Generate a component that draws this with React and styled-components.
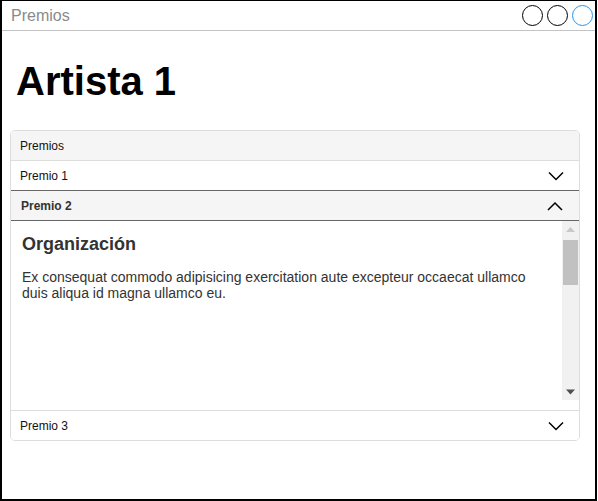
import React from "react";
import styled, { createGlobalStyle } from "styled-components";

const GlobalStyle = createGlobalStyle`
  html, body {
    margin: 0;
    padding: 0;
    background: #fff;
  }
  body {
    font-family: "Liberation Sans", Arial, Helvetica, sans-serif;
  }
`;

const Frame = styled.div`
  box-sizing: border-box;
  width: 597px;
  height: 501px;
  border: 2px solid #000;
  border-top-width: 1px;
  display: flex;
  flex-direction: column;
  overflow: hidden;
`;

const TitleBar = styled.div`
  height: 29px;
  border-bottom: 1px solid #c4c4c4;
  display: flex;
  align-items: center;
  justify-content: space-between;
  padding: 0 2px 0 9px;
`;

const TitleText = styled.span`
  font-size: 16px;
  color: #8a8a8a;
`;

const Dots = styled.div`
  display: flex;
  gap: 4px;
`;

const Dot = styled.span`
  box-sizing: border-box;
  width: 21px;
  height: 21px;
  border-radius: 50%;
  border: 1px solid ${(p) => (p.$active ? "#2196f3" : "#000")};
`;

const Content = styled.div`
  padding: 0 8px;
`;

const Heading = styled.h1`
  margin: 27px 6px 26px;
  font-size: 40px;
  line-height: 46px;
  font-weight: bold;
  color: #000;
`;

const Card = styled.div`
  box-sizing: border-box;
  width: 570px;
  border: 1px solid #ddd;
  border-radius: 5px;
  overflow: hidden;
`;

const CardHeader = styled.div`
  height: 29px;
  display: flex;
  align-items: center;
  padding: 0 9px;
  background: #f5f5f5;
  border-bottom: 1px solid #ddd;
  font-size: 12px;
  color: #111;
`;

const Row = styled.div`
  box-sizing: border-box;
  height: ${(p) => (p.$open ? "31px" : "29px")};
  display: flex;
  align-items: center;
  justify-content: space-between;
  font-size: 12px;
  color: ${(p) => (p.$open ? "#333" : "#111")};
  font-weight: ${(p) => (p.$open ? "bold" : "normal")};
  background: ${(p) => (p.$open ? "#f5f5f5" : "#fff")};
  border: ${(p) => (p.$open ? "1px solid #666" : "none")};
  margin: ${(p) => (p.$open ? "0 -1px" : "0")};
  padding-left: ${(p) => (p.$open ? "10px" : "9px")};
  padding-right: ${(p) => (p.$open ? "16px" : "15px")};
`;

const Body = styled.div`
  padding-bottom: 10px;
  border-bottom: 1px solid #ddd;
`;

const Scroller = styled.div`
  height: 179px;
  display: flex;
`;

const Panel = styled.div`
  flex: 1;
  padding: 10px 11px;
  color: #333;
`;

const PanelTitle = styled.h3`
  margin: 2px 0 14px;
  font-size: 18px;
  line-height: 22px;
  font-weight: bold;
`;

const PanelText = styled.p`
  margin: 0;
  font-size: 14px;
  line-height: 16px;
`;

const ScrollBar = styled.div`
  width: 17px;
  background: #f1f1f1;
  display: flex;
  flex-direction: column;
`;

const ScrollButton = styled.div`
  height: 17px;
  display: flex;
  align-items: center;
  justify-content: center;
`;

const ScrollTrack = styled.div`
  flex: 1;
  padding: 2px 1px;
`;

const Thumb = styled.div`
  height: 45px;
  background: #c1c1c1;
`;

const Chevron = ({ up }) => (
  <svg width="16" height="10" viewBox="0 0 16 10">
    <polyline
      points={up ? "1,9 8,2 15,9" : "1,1.5 8,8.5 15,1.5"}
      fill="none"
      stroke="#000"
      strokeWidth="1.5"
    />
  </svg>
);

const Arrow = ({ up, color }) => (
  <svg width="9" height="6" viewBox="0 0 9 6">
    <polygon points={up ? "0,5 9,5 4.5,0" : "0,0.5 9,0.5 4.5,5.5"} fill={color} />
  </svg>
);

const App = () => {
  return (
    <>
      <GlobalStyle />
      <Frame>
        <TitleBar>
          <TitleText>Premios</TitleText>
          <Dots>
            <Dot />
            <Dot />
            <Dot $active />
          </Dots>
        </TitleBar>
        <Content>
          <Heading>Artista 1</Heading>
          <Card>
            <CardHeader>Premios</CardHeader>
            <Row>
              Premio 1
              <Chevron />
            </Row>
            <Row $open>
              Premio 2
              <Chevron up />
            </Row>
            <Body>
              <Scroller>
                <Panel>
                  <PanelTitle>Organización</PanelTitle>
                  <PanelText>
                    Ex consequat commodo adipisicing exercitation aute excepteur
                    occaecat ullamco duis aliqua id magna ullamco eu.
                  </PanelText>
                </Panel>
                <ScrollBar>
                  <ScrollButton>
                    <Arrow up color="#c8c8c8" />
                  </ScrollButton>
                  <ScrollTrack>
                    <Thumb />
                  </ScrollTrack>
                  <ScrollButton>
                    <Arrow color="#505050" />
                  </ScrollButton>
                </ScrollBar>
              </Scroller>
            </Body>
            <Row>
              Premio 3
              <Chevron />
            </Row>
          </Card>
        </Content>
      </Frame>
    </>
  );
};

export default App;
